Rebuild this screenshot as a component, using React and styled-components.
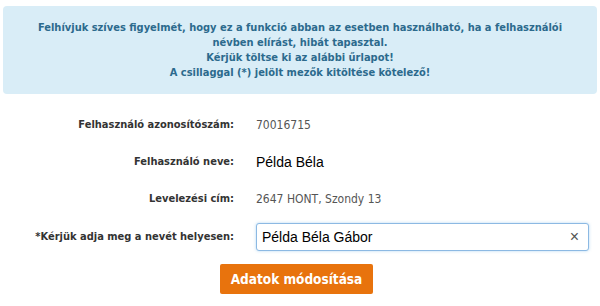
import React, { useState } from 'react';
import styled, { createGlobalStyle } from 'styled-components';

const GlobalStyle = createGlobalStyle`
  html, body {
    margin: 0;
    padding: 0;
    background: #ffffff;
  }
  body {
    font-family: "DejaVu Sans Condensed", "DejaVu Sans", sans-serif;
  }
`;

const Page = styled.div`
  width: 600px;
  padding: 6px 3px 0;
  box-sizing: border-box;
`;

const Notice = styled.div`
  background: #d9edf7;
  color: #2c6a8d;
  border-radius: 4px;
  padding: 14px 10px 14px;
  text-align: center;
  font-size: 11px;
  font-weight: 700;
  line-height: 15px;
`;

const Form = styled.div`
  display: grid;
  grid-template-columns: 231px 1fr;
  column-gap: 22px;
  align-items: center;
  margin-top: 12px;
`;

const Row = styled.div`
  display: contents;
`;

const Label = styled.div`
  text-align: right;
  font-size: 11px;
  font-weight: 700;
  color: #333333;
  height: ${(p) => p.$h || 37}px;
  line-height: ${(p) => p.$h || 37}px;
`;

const Value = styled.div`
  font-size: ${(p) => (p.$strong ? '14px' : '12px')};
  font-family: ${(p) =>
    p.$strong ? '"Liberation Sans", Arial, sans-serif' : 'inherit'};
  color: ${(p) => (p.$strong ? '#000000' : '#555555')};
`;

const InputWrap = styled.div`
  position: relative;
  width: 333px;
  height: 28px;
`;

const NameInput = styled.input`
  box-sizing: border-box;
  width: 100%;
  height: 100%;
  border: 1px solid #8cb9e3;
  border-radius: 3px;
  box-shadow: 0 0 3px rgba(102, 175, 233, 0.5);
  padding: 0 28px 0 5px;
  font-family: "Liberation Sans", Arial, sans-serif;
  font-size: 14px;
  color: #000000;
  outline: none;
`;

const ClearButton = styled.button`
  position: absolute;
  right: 10px;
  top: 50%;
  transform: translateY(-50%);
  border: none;
  background: none;
  padding: 0;
  color: #555555;
  font-size: 16px;
  line-height: 1;
  cursor: pointer;
  font-family: "Liberation Sans", Arial, sans-serif;
`;

const Actions = styled.div`
  grid-column: 1 / -1;
  padding-left: 217px;
  margin-top: 7px;
`;

const SubmitButton = styled.button`
  background: #e8730d;
  color: #ffffff;
  border: none;
  border-radius: 2px;
  width: 153px;
  height: 30px;
  font-family: inherit;
  font-size: 13.5px;
  font-weight: 700;
  cursor: pointer;
`;

export default function App() {
  const [name, setName] = useState('Példa Béla Gábor');

  return (
    <>
      <GlobalStyle />
      <Page>
        <Notice>
          Felhívjuk szíves figyelmét, hogy ez a funkció abban az esetben használható, ha a felhasználói
          <br />
          névben elírást, hibát tapasztal.
          <br />
          Kérjük töltse ki az alábbi űrlapot!
          <br />
          A csillaggal (*) jelölt mezők kitöltése kötelező!
        </Notice>

        <Form>
          <Row>
            <Label>Felhasználó azonosítószám:</Label>
            <Value>70016715</Value>
          </Row>
          <Row>
            <Label>Felhasználó neve:</Label>
            <Value $strong>Példa Béla</Value>
          </Row>
          <Row>
            <Label>Levelezési cím:</Label>
            <Value>2647 HONT, Szondy 13</Value>
          </Row>
          <Row>
            <Label $h={40}>*Kérjük adja meg a nevét helyesen:</Label>
            <InputWrap>
              <NameInput value={name} onChange={(e) => setName(e.target.value)} />
              <ClearButton onClick={() => setName('')}>×</ClearButton>
            </InputWrap>
          </Row>
          <Actions>
            <SubmitButton>Adatok módosítása</SubmitButton>
          </Actions>
        </Form>
      </Page>
    </>
  );
}
